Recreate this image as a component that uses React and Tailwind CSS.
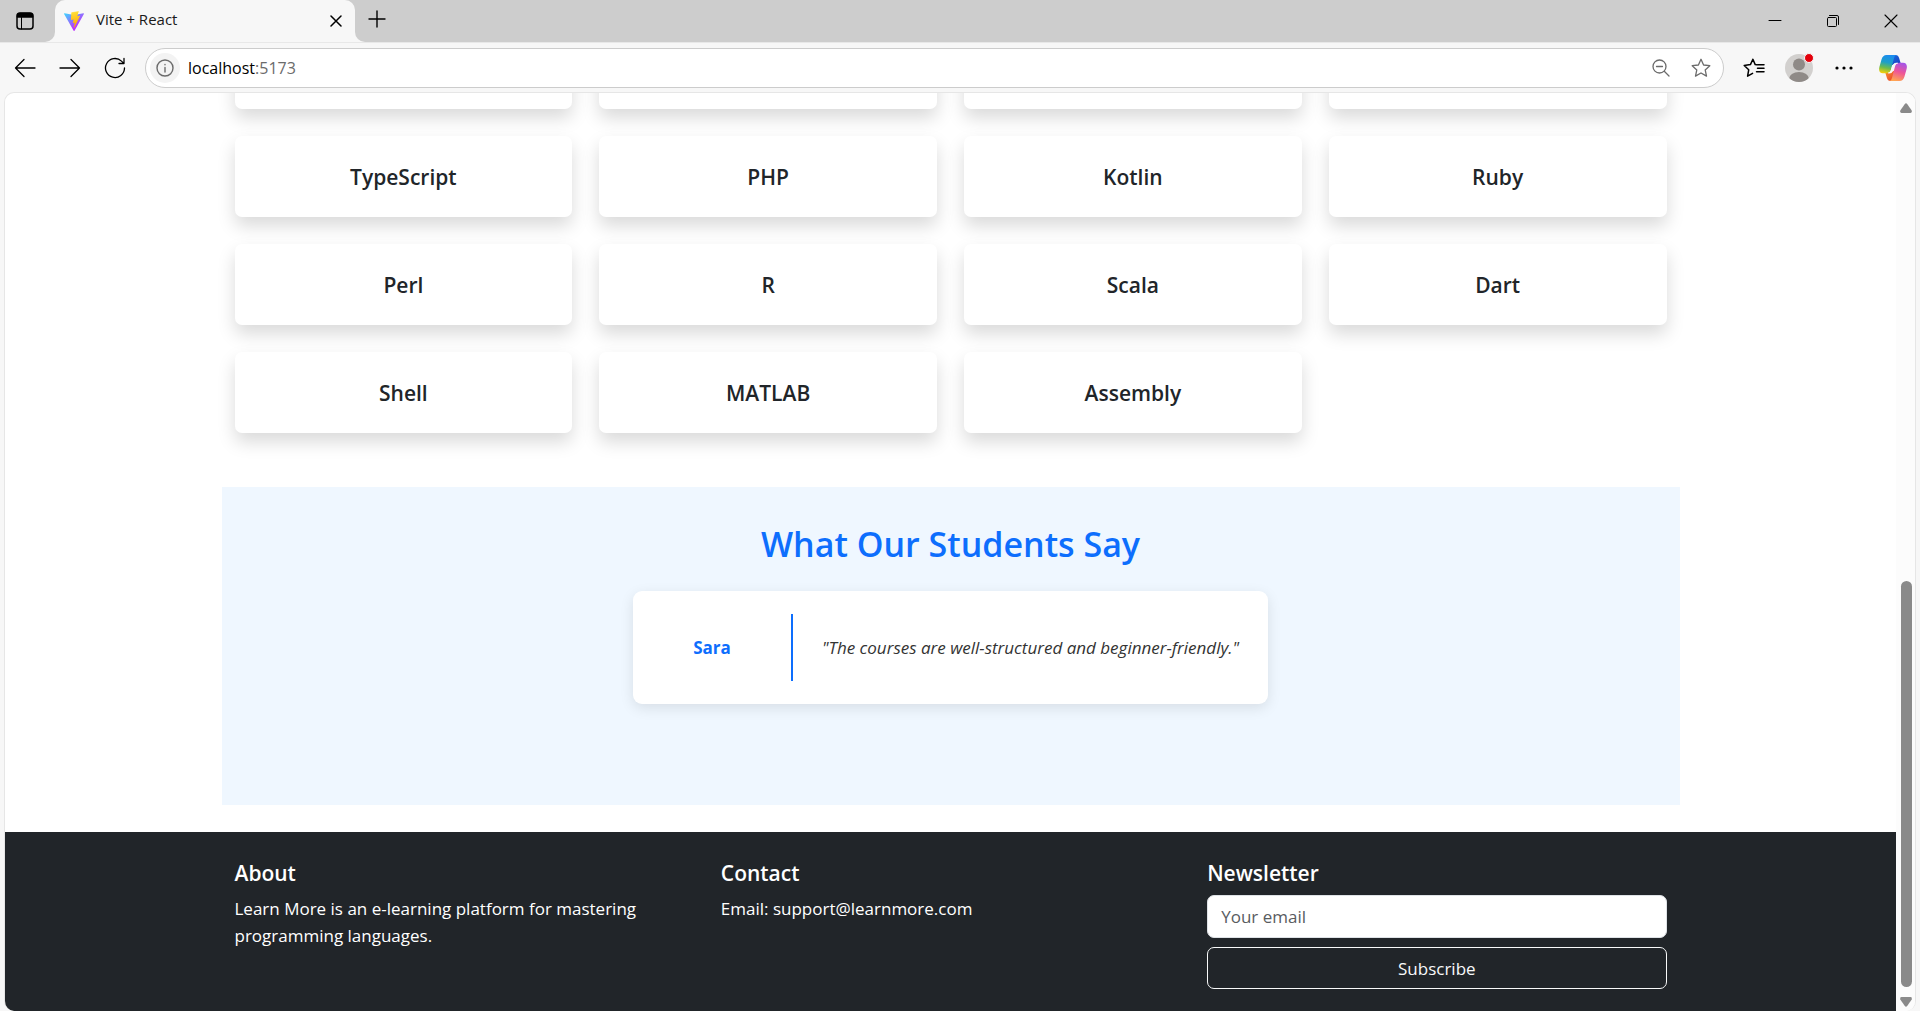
import React from "react";

const languages = [
  "TypeScript", "PHP", "Kotlin", "Ruby",
  "Perl", "R", "Scala", "Dart",
  "Shell", "MATLAB", "Assembly",
];

const iconButton = "flex shrink-0 items-center justify-center";

function Stroke({ size = 20, width = 1.3, className = "", children }) {
  return (
    <svg
      width={size}
      height={size}
      viewBox={`0 0 ${size} ${size}`}
      fill="none"
      stroke="currentColor"
      strokeWidth={width}
      strokeLinecap="round"
      strokeLinejoin="round"
      className={className}
      aria-hidden="true"
    >
      {children}
    </svg>
  );
}

function ViteLogo() {
  return (
    <svg width="20" height="20" viewBox="0 0 256 257" aria-hidden="true">
      <defs>
        <linearGradient id="viteA" x1="-.8%" x2="57.6%" y1="7.6%" y2="78.4%">
          <stop offset="0%" stopColor="#41D1FF" />
          <stop offset="100%" stopColor="#BD34FE" />
        </linearGradient>
        <linearGradient id="viteB" x1="43.4%" x2="50.3%" y1="2.2%" y2="89%">
          <stop offset="0%" stopColor="#FFEA83" />
          <stop offset="8.3%" stopColor="#FFDD35" />
          <stop offset="100%" stopColor="#FFA800" />
        </linearGradient>
      </defs>
      <path fill="url(#viteA)" d="M255.153 37.938L134.897 252.976c-2.483 4.44-8.862 4.466-11.382.048L.875 37.958c-2.746-4.814 1.371-10.646 6.827-9.67l120.385 21.517a6.537 6.537 0 0 0 2.322-.004l117.867-21.483c5.438-.991 9.574 4.796 6.877 9.62Z" />
      <path fill="url(#viteB)" d="M185.432.063L96.44 17.501a3.268 3.268 0 0 0-2.634 3.014l-5.474 92.456a3.268 3.268 0 0 0 3.997 3.378l24.777-5.718c2.318-.535 4.413 1.507 3.936 3.838l-7.361 36.047c-.495 2.426 1.782 4.5 4.151 3.78l15.304-4.649c2.372-.72 4.652 1.36 4.15 3.788l-11.698 56.621c-.732 3.542 3.979 5.473 5.943 2.437l1.313-2.028l72.516-144.72c1.215-2.423-.88-5.186-3.54-4.672l-25.505 4.922c-2.396.462-4.435-1.77-3.759-4.114l16.646-57.705c.677-2.35-1.37-4.583-3.769-4.113Z" />
    </svg>
  );
}

function CopilotLogo() {
  return (
    <svg width="28" height="26" viewBox="0 0 28 26" aria-hidden="true">
      <defs>
        <linearGradient id="copA" x1="0.5" y1="0" x2="0.3" y2="1">
          <stop offset="0" stopColor="#1b8cf0" />
          <stop offset="0.4" stopColor="#1d9fc8" />
          <stop offset="0.7" stopColor="#6cbc4c" />
          <stop offset="1" stopColor="#f6cf0a" />
        </linearGradient>
        <linearGradient id="copB" x1="0.7" y1="0" x2="0.4" y2="1">
          <stop offset="0" stopColor="#a455e8" />
          <stop offset="0.5" stopColor="#ee5599" />
          <stop offset="1" stopColor="#ffa552" />
        </linearGradient>
        <linearGradient id="copC" x1="0" y1="0" x2="1" y2="1">
          <stop offset="0" stopColor="#1670e0" />
          <stop offset="1" stopColor="#1b3fc0" />
        </linearGradient>
        <linearGradient id="copD" x1="0" y1="0" x2="1" y2="1">
          <stop offset="0" stopColor="#f8922c" />
          <stop offset="1" stopColor="#e8382e" />
        </linearGradient>
      </defs>
      <path fill="url(#copC)" d="M11 0h5.500c2 0 3 1.200 3.600 3l1.500 5h-3.600c-1.800 0-3 .6-3.600 2L11 10z" />
      <path fill="url(#copD)" d="M17 26h-5.500c-2 0-3-1.200-3.600-3l-1.500-5H10c1.800 0 3-.6 3.600-2L17 16z" />
      <path fill="url(#copA)" d="M7.500 0h10.200c-1.700.3-2.200 1.500-2.800 3.500L12 14.500c-.7 2.500-2 3.700-4.500 3.700H4C.6 18.200-.5 15.500.4 12L2.500 4.500C3.400 1.500 5 0 7.500 0z" />
      <path fill="url(#copB)" d="M20.500 26H10.300c1.700-.3 2.200-1.500 2.800-3.500L16 11.500c.7-2.500 2-3.700 4.500-3.700H24c3.400 0 4.500 2.700 3.600 6.200l-2.100 7.500c-.9 3-2.500 4.500-5 4.500z" />
      <path fill="#f7f7f7" d="M18.500 8.200c-2.300.3-3.300 1.500-3.900 3.600l-1.400 4.600c-.4 1-1.200 1.500-3.700 1.600 2-.6 2.600-1.700 3.100-3.400l1.200-4c.6-1.700 2-2.400 4.700-2.400z" stroke="#f7f7f7" strokeWidth="1" />
    </svg>
  );
}

const starPath = "M10 1.300l2.600 5.700 6.200.7-4.600 4.200 1.300 6.200-5.500-3.100-5.500 3.100 1.300-6.200L1.200 7.700l6.200-.7z";

function TitleBar() {
  return (
    <header className="flex h-[42px] shrink-0 bg-[#cdcdcd]">
      <div className="w-[55px] shrink-0 bg-[#f7f7f7]">
        <button aria-label="Tab actions" className={`${iconButton} h-full w-full rounded-br-[10px] bg-[#cdcdcd] pr-[5px] pb-px`}>
          <Stroke size={18} width={1.5}>
            <rect x="1" y="1" width="16" height="16" rx="3" />
            <path d="M1.500 5V4q0-2.500 2.500-2.500h10q2.500 0 2.500 2.500v1z" fill="currentColor" />
            <path d="M5.500 5.500V17" strokeWidth="1" />
          </Stroke>
        </button>
      </div>
      <div className="flex w-[300px] shrink-0 items-center rounded-t-[10px] bg-[#f7f7f7] pr-[7px] pl-[9px]">
        <ViteLogo />
        <span className="ml-3 flex-1 pb-1 text-[15px] leading-5 text-[#1a1a1a]">Vite + React</span>
        <button aria-label="Close tab" className={`${iconButton} size-6`}>
          <Stroke size={12} width={1.5}><path d="M1 1l10 10M11 1L1 11" /></Stroke>
        </button>
      </div>
      <div className="flex-1 bg-[#f7f7f7]">
        <div className="flex h-full items-center rounded-bl-[10px] bg-[#cdcdcd]">
          <button aria-label="New tab" className={`${iconButton} ml-2 size-7 pb-1`}>
            <Stroke size={18} width={1.4}><path d="M9 1v16M1 9h16" /></Stroke>
          </button>
          <div className="ml-auto flex">
            <button aria-label="Minimize" className={`${iconButton} w-[58px]`}>
              <Stroke size={14} width={1}><path d="M1 6.500h12" /></Stroke>
            </button>
            <button aria-label="Restore" className={`${iconButton} w-[58px]`}>
              <Stroke size={14} width={1}>
                <rect x="1.500" y="3.500" width="9" height="9" rx="1" />
                <path d="M3.500 1.500H11q1.500 0 1.500 1.500v7.500" />
              </Stroke>
            </button>
            <button aria-label="Close" className={`${iconButton} w-[58px]`}>
              <Stroke size={14} width={1.1}><path d="M1 1l12 12M13 1L1 13" /></Stroke>
            </button>
          </div>
        </div>
      </div>
    </header>
  );
}

function Toolbar() {
  return (
    <nav aria-label="Browser" className="flex h-[50px] shrink-0 items-center border-t border-[#e8e8e8] pr-[13px] pl-3">
      <div className="flex w-[133px] shrink-0 gap-[19px]">
        <button aria-label="Back" className={`${iconButton} size-[26px]`}>
          <Stroke size={22} width={1.3}><path d="M21 11H1.500M10 2.500L1.500 11l8.500 8.500" /></Stroke>
        </button>
        <button aria-label="Forward" className={`${iconButton} size-[26px]`}>
          <Stroke size={22} width={1.3}><path d="M1 11h19.500M12 2.500l8.500 8.500-8.500 8.500" /></Stroke>
        </button>
        <button aria-label="Refresh" className={`${iconButton} size-[26px]`}>
          <Stroke size={22} width={1.3}><path d="M20.500 11a9.500 9.500 0 1 1-3-6.900l2 2M20 1.500v5h-5" /></Stroke>
        </button>
      </div>
      <div className="flex h-10 flex-1 items-center rounded-full border border-[#cccccc] bg-white pr-3 pl-1">
        <button aria-label="Site information" className={`${iconButton} size-[30px] rounded-full bg-[#f3f3f3] text-[#6b6b6b]`}>
          <Stroke size={18} width={1.4}>
            <circle cx="9" cy="9" r="8" />
            <path d="M9 8.500V13M9 5.500v.2" />
          </Stroke>
        </button>
        <a href="http://localhost:5173" className="ml-2 flex-1 text-[16px] leading-6 text-[#6b6b6b]">
          <span className="text-black">localhost</span>:5173
        </a>
        <button aria-label="Zoom" className={`${iconButton} size-5 text-[#6b6b6b]`}>
          <Stroke size={18} width={1.3}>
            <circle cx="7.500" cy="7.500" r="6.500" />
            <path d="M12.500 12.500L17 17M4.500 7.500h6" />
          </Stroke>
        </button>
        <button aria-label="Add to favorites" className={`${iconButton} ml-5 size-5 text-[#6b6b6b]`}>
          <Stroke size={20} width={1.3}><path d={starPath} /></Stroke>
        </button>
      </div>
      <button aria-label="Favorites" className={`${iconButton} ml-[19px] h-6 w-[22px]`}>
        <svg width="22" height="20" viewBox="0 0 22 20" fill="none" stroke="currentColor" strokeWidth="1.500" strokeLinecap="round" strokeLinejoin="round" aria-hidden="true">
          <path d="M13.500 6.800L12.200 6.600 9.900 1.300 7.400 6.600 1.200 7.500l4.500 4.300L4.600 18.200l5-2.800M14.500 10.300h6.500M14.500 6.800h6.500M13.500 13.800h7.500" />
        </svg>
      </button>
      <button aria-label="Profile" className="relative ml-5 size-7 shrink-0">
        <svg width="28" height="28" viewBox="0 0 28 28" aria-hidden="true">
          <defs><clipPath id="avatar"><circle cx="14" cy="14" r="14" /></clipPath></defs>
          <g clipPath="url(#avatar)">
            <rect width="28" height="28" fill="#d2d0ce" />
            <circle cx="14" cy="10.500" r="6" fill="#8f8a87" />
            <ellipse cx="14" cy="25" rx="10" ry="7" fill="#8f8a87" />
          </g>
        </svg>
        <span className="absolute -top-px -right-px size-[10px] rounded-full border border-[#f7f7f7] bg-[#e3000b]" />
      </button>
      <button aria-label="Settings and more" className={`${iconButton} ml-[22px] h-6 w-[18px]`}>
        <svg width="18" height="4" viewBox="0 0 18 4" aria-hidden="true">
          <circle cx="2" cy="2" r="1.600" /><circle cx="9" cy="2" r="1.600" /><circle cx="16" cy="2" r="1.600" />
        </svg>
      </button>
      <button aria-label="Copilot" className={`${iconButton} ml-[26px] h-7 w-7`}>
        <CopilotLogo />
      </button>
    </nav>
  );
}

function Card({ children }) {
  return (
    <article className="h-[81px] rounded-[7px] bg-white p-[27px] text-center shadow-[0_9px_18px_rgba(0,0,0,0.15)]">
      <h5 className="text-[21px] leading-[29px] font-semibold">{children}</h5>
    </article>
  );
}

function Testimonials() {
  return (
    <section className="flex h-[318px] flex-col items-center bg-[#eff7ff] pt-9">
      <h2 className="mb-[25px] text-[34px] leading-[43px] font-semibold text-[#0d6efd]">What Our Students Say</h2>
      <blockquote className="flex w-[635px] rounded-[9px] bg-white p-[23px] shadow-[0_4px_14px_rgba(0,0,0,0.1)]">
        <div className="flex h-[67px] w-[137px] items-center justify-center border-r-2 border-[#0d6efd] pr-[23px] text-[17px] font-bold text-[#0d6efd]">
          Sara
        </div>
        <p className="flex flex-1 items-center justify-center pl-[23px] text-[17px] whitespace-nowrap text-[#333333] italic">
          "The courses are well-structured and beginner-friendly."
        </p>
      </blockquote>
    </section>
  );
}

function Footer() {
  return (
    <footer className="mt-[27px] bg-[#212529] pt-[27px] pb-[22px] text-[17px] leading-[27px] text-white">
      <div className="mx-auto grid max-w-[1458px] grid-cols-3 gap-[27px] px-[13px]">
        <div>
          <h5 className="mb-[7px] text-[21px] leading-[29px] font-semibold">About</h5>
          <p>Learn More is an e-learning platform for mastering programming languages.</p>
        </div>
        <div>
          <h5 className="mb-[7px] text-[21px] leading-[29px] font-semibold">Contact</h5>
          <p>Email: support@learnmore.com</p>
        </div>
        <form onSubmit={(e) => e.preventDefault()}>
          <h5 className="mb-[7px] text-[21px] leading-[29px] font-semibold">Newsletter</h5>
          <input
            type="email"
            aria-label="Your email"
            placeholder="Your email"
            className="mb-[9px] block h-[43px] w-full rounded-[7px] border border-[#dee2e6] bg-white px-[13px] text-[#212529] placeholder:text-[#595c5f]"
          />
          <button className="h-[42px] w-full rounded-[7px] border border-[#f8f9fa] text-[#f8f9fa]">Subscribe</button>
        </form>
      </div>
    </footer>
  );
}

function Scrollbar() {
  return (
    <div aria-hidden="true" className="flex w-[19px] shrink-0 flex-col items-center bg-[#fcfcfc] pl-px text-[#8a8a8a]">
      <svg width="12" height="10" viewBox="0 0 12 10" className="mt-[10px]">
        <path fill="currentColor" d="M4.800 1Q6-.5 7.200 1l4.500 6.500Q12.200 10 10.500 10h-9Q-.2 10 .3 7.500z" />
      </svg>
      <div className="flex-1" />
      <div className="h-[406px] w-[11px] rounded-full bg-[#8a8a8a]" />
      <svg width="12" height="10" viewBox="0 0 12 10" className="mt-[10px] mb-1">
        <path fill="currentColor" d="M4.800 9Q6 10.500 7.200 9l4.500-6.500Q12.200 0 10.500 0h-9Q-.2 0 .3 2.500z" />
      </svg>
    </div>
  );
}

export default function App() {
  return (
    <div className="flex h-screen flex-col overflow-hidden bg-[#f7f7f7] font-['Open_Sans','Noto_Sans',sans-serif] text-black">
      <TitleBar />
      <Toolbar />
      <div className="mx-1 flex min-h-0 flex-1 overflow-hidden rounded-[10px] border border-b-0 border-[#e6e6e6] bg-white">
        <main className="flex min-w-0 flex-1 flex-col justify-end text-[#212529]">
          <div className="mx-auto w-full max-w-[1458px]">
            <div className="mb-[54px] grid grid-cols-4 gap-[27px] px-[13px]">
              <Card />
              <Card />
              <Card />
              <Card />
              {languages.map((name) => (
                <Card key={name}>{name}</Card>
              ))}
            </div>
            <Testimonials />
          </div>
          <Footer />
        </main>
        <Scrollbar />
      </div>
    </div>
  );
}
